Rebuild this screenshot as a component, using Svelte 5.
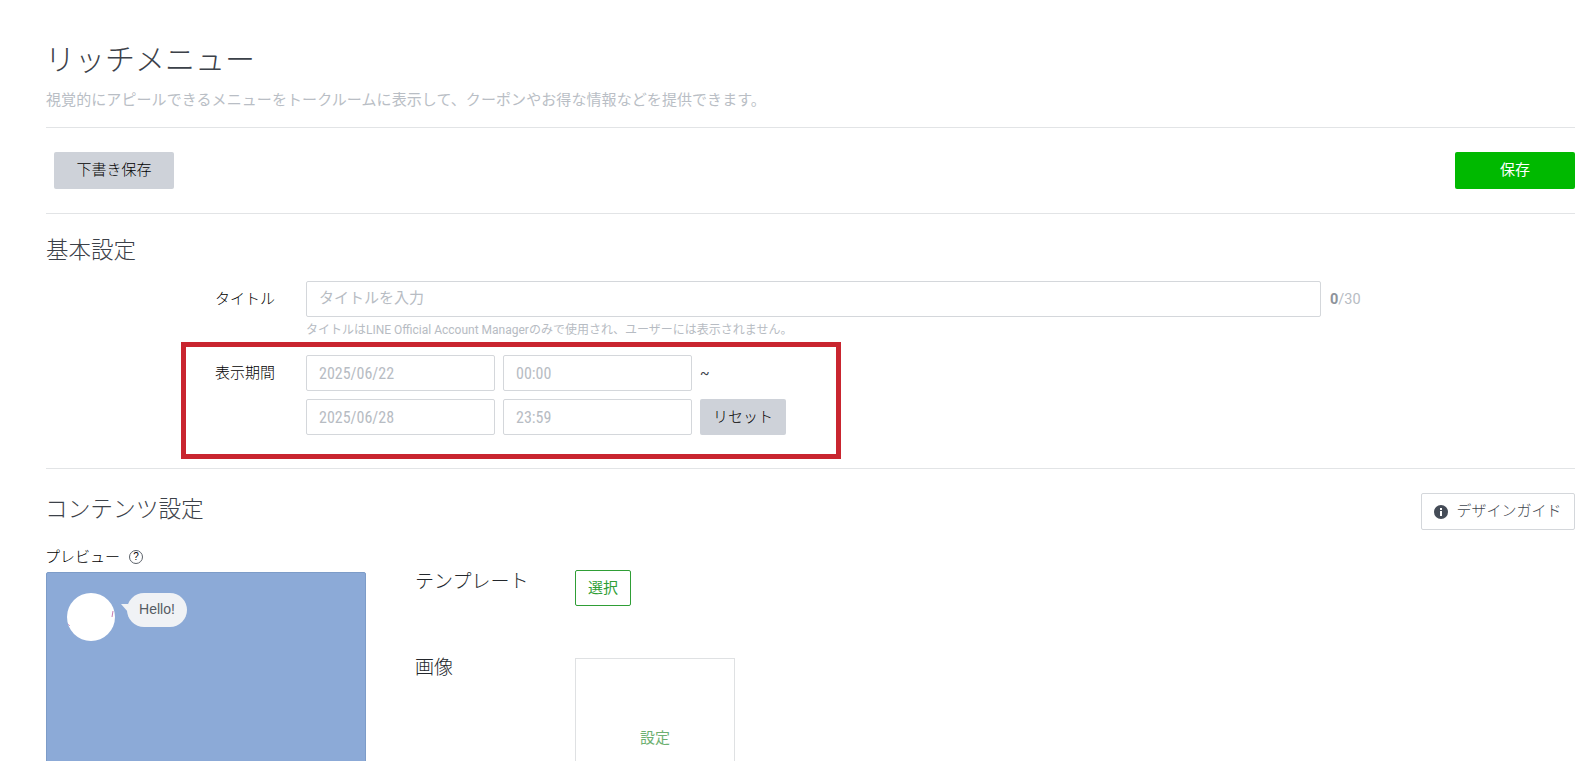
<script lang="ts">
  let title = $state("");
</script>

<div class="page">
  <header class="head">
    <h1>リッチメニュー</h1>
    <p>視覚的にアピールできるメニューをトークルームに表示して、クーポンやお得な情報などを提供できます。</p>
  </header>

  <div class="toolbar">
    <button class="btn gray draft">下書き保存</button>
    <button class="btn save">保存</button>
  </div>

  <section class="basic">
    <h2>基本設定</h2>
    <div class="row title-row">
      <span class="label">タイトル</span>
      <input class="field title-field" bind:value={title} placeholder="タイトルを入力" />
      <span class="count"><b>0</b>/30</span>
    </div>
    <p class="help">タイトルはLINE Official Account Managerのみで使用され、ユーザーには表示されません。</p>

    <div class="period">
      <span class="label">表示期間</span>
      <div class="dates">
        <input class="field date" placeholder="2025/06/22" />
        <input class="field date time" placeholder="00:00" />
        <span class="tilde">~</span>
        <input class="field date" placeholder="2025/06/28" />
        <input class="field date time" placeholder="23:59" />
        <button class="btn gray reset">リセット</button>
      </div>
    </div>
  </section>

  <section class="content">
    <div class="content-head">
      <h2>コンテンツ設定</h2>
      <button class="btn guide">
        <svg width="14" height="14" viewBox="0 0 14 14" aria-hidden="true">
          <circle cx="7" cy="7" r="7" fill="#454c57" />
          <rect x="6" y="6" width="2" height="5" fill="#fff" />
          <rect x="6" y="3" width="2" height="2" fill="#fff" />
        </svg>
        <span>デザインガイド</span>
      </button>
    </div>

    <div class="content-body">
      <div class="preview-col">
        <div class="preview-label">プレビュー <span class="q">?</span></div>
        <div class="preview">
          <div class="avatar">
            <svg width="48" height="48" viewBox="0 0 48 48" aria-hidden="true">
              <path d="M46 18l-1 6" stroke="#c77bb0" stroke-width="1" fill="none" />
              <path d="M1 31l2 2" stroke="#d9a8cc" stroke-width="1" fill="none" />
            </svg>
          </div>
          <div class="bubble">Hello!</div>
        </div>
      </div>

      <div class="settings">
        <div class="set-row template">
          <span class="set-label">テンプレート</span>
          <button class="btn pick">選択</button>
        </div>
        <div class="set-row">
          <span class="set-label">画像</span>
          <button class="image-box">設定</button>
        </div>
      </div>
    </div>
  </section>
</div>

<style>
  :global(body) {
    margin: 0;
    background: #fff;
  }

  .page {
    box-sizing: border-box;
    height: 100vh;
    overflow: hidden;
    padding: 40px 19px 0 46px;
    font-family: Roboto, "Noto Sans CJK JP", sans-serif;
    color: #3c4149;
  }

  h1,
  h2,
  p {
    margin: 0;
    font-weight: 300;
  }

  h1 {
    margin-left: -1px;
    font-size: 30px;
    line-height: 40px;
  }

  h2 {
    font-size: 22.5px;
    line-height: 30px;
  }

  .head {
    padding-bottom: 17px;
    border-bottom: 1px solid #e2e4e6;
  }

  .head p {
    margin-top: 10px;
    font-size: 15px;
    letter-spacing: 0.08px;
    line-height: 20px;
    font-weight: 400;
    color: #b9bec5;
    white-space: nowrap;
  }

  .btn {
    box-sizing: border-box;
    border: 0;
    border-radius: 2px;
    padding: 0 0 4px;
    font: inherit;
    font-size: 15px;
    font-weight: 300;
    color: #000;
  }

  .gray {
    background: #ced2d9;
  }

  .toolbar {
    display: flex;
    justify-content: space-between;
    padding: 24px 0;
    border-bottom: 1px solid #e2e4e6;
  }

  .draft {
    width: 120px;
    height: 37px;
    margin-left: 8px;
  }

  .save {
    width: 120px;
    height: 37px;
    background: #00b900;
    color: #fff;
    font-weight: 400;
  }

  .basic {
    padding: 21px 0 9px;
    border-bottom: 1px solid #e2e4e6;
  }

  .row {
    display: flex;
    align-items: center;
  }

  .label {
    font-size: 15px;
    font-weight: 300;
    color: #000;
    text-align: right;
  }

  .title-row {
    margin-top: 16px;
  }

  .title-row .label {
    width: 229px;
    margin-right: 31px;
    padding-bottom: 4px;
  }

  .field {
    box-sizing: border-box;
    height: 36px;
    border: 1px solid #d4d7db;
    border-radius: 2px;
    padding: 0 12px 3px;
    font: inherit;
    font-size: 15px;
    color: #3c4149;
    background: #fff;
    outline: none;
  }

  .field::placeholder {
    color: #b7bcc3;
    opacity: 1;
  }

  .title-field {
    width: 1015px;
  }

  .count {
    margin-left: 9px;
    font-size: 14.5px;
    color: #b7bcc3;
  }

  .count b {
    color: #8d939b;
  }

  .help {
    margin: 5px 0 0 260px;
    font-size: 12px;
    line-height: 16px;
    color: #b7bcc3;
    font-weight: 400;
  }

  .period {
    box-sizing: border-box;
    display: flex;
    align-items: flex-start;
    width: 660px;
    height: 117px;
    margin: 4px 0 0 135px;
    padding-top: 8px;
    border: 5px solid #c9252f;
  }

  .period .label {
    width: 89px;
    margin-top: 1px;
    margin-right: 31px;
    line-height: 34px;
    font-size: 15px;
  }

  .dates {
    display: grid;
    grid-template-columns: 189px 189px auto;
    gap: 8px;
    align-items: center;
    justify-items: start;
  }

  .date {
    width: 100%;
    padding: 1px 12px 0;
    font-family: "Roboto Condensed", Roboto, sans-serif;
    font-stretch: condensed;
    font-size: 16px;
    letter-spacing: 0;
  }

  .tilde {
    font-size: 14px;
  }

  .reset {
    width: 86px;
    height: 36px;
  }

  .content-head {
    display: flex;
    justify-content: space-between;
    align-items: center;
    padding-top: 24px;
  }

  .content-head h2 {
    margin-left: -1px;
    padding-bottom: 3px;
    font-size: 22.7px;
  }

  .guide {
    display: flex;
    align-items: center;
    justify-content: center;
    gap: 8px;
    width: 154px;
    height: 37px;
    padding: 0;
    background: #fff;
    border: 1px solid #d4d7db;
    font-size: 15px;
    color: #41464e;
  }

  .guide span {
    padding-bottom: 4px;
  }

  .content-body {
    display: flex;
    margin-top: 17px;
  }

  .preview-col {
    width: 320px;
    flex: none;
  }

  .preview-label {
    display: flex;
    align-items: center;
    gap: 5px;
    margin-left: -1px;
    font-size: 15px;
    font-weight: 300;
    line-height: 20px;
    color: #000;
  }

  .q {
    box-sizing: border-box;
    display: inline-block;
    width: 14px;
    height: 14px;
    margin-left: 4px;
    border: 1px solid #5c626a;
    border-radius: 50%;
    font-family: "Liberation Sans", sans-serif;
    font-size: 10px;
    line-height: 12px;
    text-align: center;
  }

  .preview {
    box-sizing: border-box;
    display: flex;
    align-items: flex-start;
    gap: 12px;
    height: 300px;
    margin-top: 5px;
    padding: 20px;
    background: #8caad7;
    border: 1px solid #7d9cc8;
    border-radius: 2px;
  }

  .avatar {
    width: 48px;
    height: 48px;
    flex: none;
    border-radius: 50%;
    background: #fff;
  }

  .avatar svg {
    display: block;
  }

  .bubble {
    position: relative;
    width: 60px;
    height: 34px;
    border-radius: 17px;
    background: #f0f2f5;
    font-family: "Liberation Sans", sans-serif;
    font-size: 14px;
    line-height: 32px;
    text-align: center;
    color: #555b63;
  }

  .bubble::before {
    content: "";
    position: absolute;
    left: -6px;
    top: 11px;
    width: 0;
    height: 0;
    border-top: 0 solid transparent;
    border-bottom: 8px solid transparent;
    border-right: 7px solid #f0f2f5;
  }

  .settings {
    margin: 23px 0 0 49px;
  }

  .set-row {
    display: flex;
    align-items: flex-start;
  }

  .template {
    margin-bottom: 52px;
  }

  .set-label {
    width: 160px;
    margin-top: 2px;
    font-size: 19px;
    line-height: 20px;
    font-weight: 300;
    color: #23272c;
  }

  .set-row:last-child .set-label {
    margin-top: 0;
  }

  .pick {
    width: 56px;
    height: 36px;
    background: #fff;
    border: 1px solid #2f9e36;
    color: #2f9e36;
    font-weight: 400;
  }

  .image-box {
    box-sizing: border-box;
    width: 160px;
    height: 160px;
    padding: 0 0 3px;
    border: 1px solid #dfe1e3;
    background: #fff;
    font: inherit;
    font-size: 15px;
    color: #6db071;
  }
</style>
